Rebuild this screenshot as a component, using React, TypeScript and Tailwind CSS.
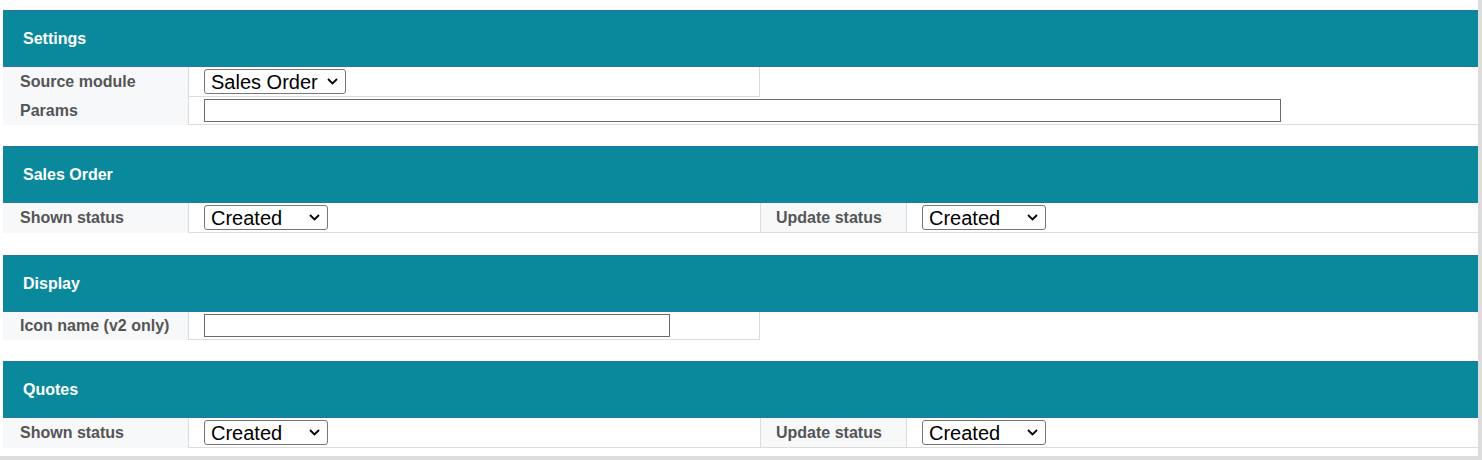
import React from "react";

const font = { fontFamily: '"Liberation Sans", Arial, sans-serif' };

function Header({ title }: { title: string }) {
  return (
    <div className="h-[57px] bg-[#0a899c] border-y border-[#2b74a9] flex items-center pl-[20px]">
      <span className="text-white font-bold text-[16px]">{title}</span>
    </div>
  );
}

function Label({ text }: { text: string }) {
  return (
    <div className="bg-[#f7f8fa] border-r border-[#dcdcdc] flex items-center pl-[17px]">
      <span className="text-[#555] font-bold text-[16px]">{text}</span>
    </div>
  );
}

function Select({ value, w }: { value: string; w: string }) {
  return (
    <div className={`relative ${w} h-[25px]`}>
      <select
        defaultValue={value}
        className="appearance-none w-full h-full border border-[#767676] rounded-[3px] bg-white text-black text-[20px] leading-none pl-[6px]"
      >
        <option>{value}</option>
        <option>Approved</option>
        <option>Delivered</option>
      </select>
      <svg
        className="absolute right-[8px] top-[9px] pointer-events-none"
        width="11"
        height="7"
        viewBox="0 0 11 7"
        fill="none"
      >
        <path d="M1 1l4.5 4.5L10 1" stroke="#000" strokeWidth="1.8" />
      </svg>
    </div>
  );
}

function StatusRow() {
  return (
    <div className="grid grid-cols-[186px_571px_147px_1fr] h-[30px]">
      <Label text="Shown status" />
      <div className="border-b border-[#dcdcdc] flex items-center pl-[15px]">
        <Select value="Created" w="w-[124px]" />
      </div>
      <div className="border-b border-[#dcdcdc] flex">
        <div className="flex-1 bg-[#f7f8fa] border-x border-[#dcdcdc] flex items-center pl-[15px]">
          <span className="text-[#555] font-bold text-[16px]">Update status</span>
        </div>
      </div>
      <div className="border-b border-[#dcdcdc] flex items-center pl-[15px]">
        <Select value="Created" w="w-[124px]" />
      </div>
    </div>
  );
}

export default function App() {
  return (
    <div style={font} className="w-[1482px] h-[460px] bg-[#dcdcdc] overflow-hidden">
      <div className="w-[1478px] h-[456px] bg-white pl-[3px] pt-[10px] flex flex-col">
        {/* Settings */}
        <Header title="Settings" />
        <div className="grid grid-cols-[186px_571px_1fr] h-[30px]">
          <Label text="Source module" />
          <div className="border-b border-r border-[#dcdcdc] flex items-center pl-[15px]">
            <Select value="Sales Order" w="w-[142px]" />
          </div>
          <div />
        </div>
        <div className="grid grid-cols-[186px_1fr] h-[28px]">
          <Label text="Params" />
          <div className="border-b border-[#dcdcdc] flex items-center pl-[15px]">
            <input className="w-[1077px] h-[23px] border border-[#6b6b6b] bg-white" />
          </div>
        </div>

        {/* Sales Order */}
        <div className="mt-[21px]">
          <Header title="Sales Order" />
          <StatusRow />
        </div>

        {/* Display */}
        <div className="mt-[22px]">
          <Header title="Display" />
          <div className="grid grid-cols-[186px_571px_1fr] h-[28px]">
            <Label text="Icon name (v2 only)" />
            <div className="border-b border-r border-[#dcdcdc] flex items-center pl-[15px]">
              <input className="w-[466px] h-[23px] border border-[#6b6b6b] bg-white" />
            </div>
            <div />
          </div>
        </div>

        {/* Quotes */}
        <div className="mt-[21px]">
          <Header title="Quotes" />
          <StatusRow />
        </div>
      </div>
    </div>
  );
}
